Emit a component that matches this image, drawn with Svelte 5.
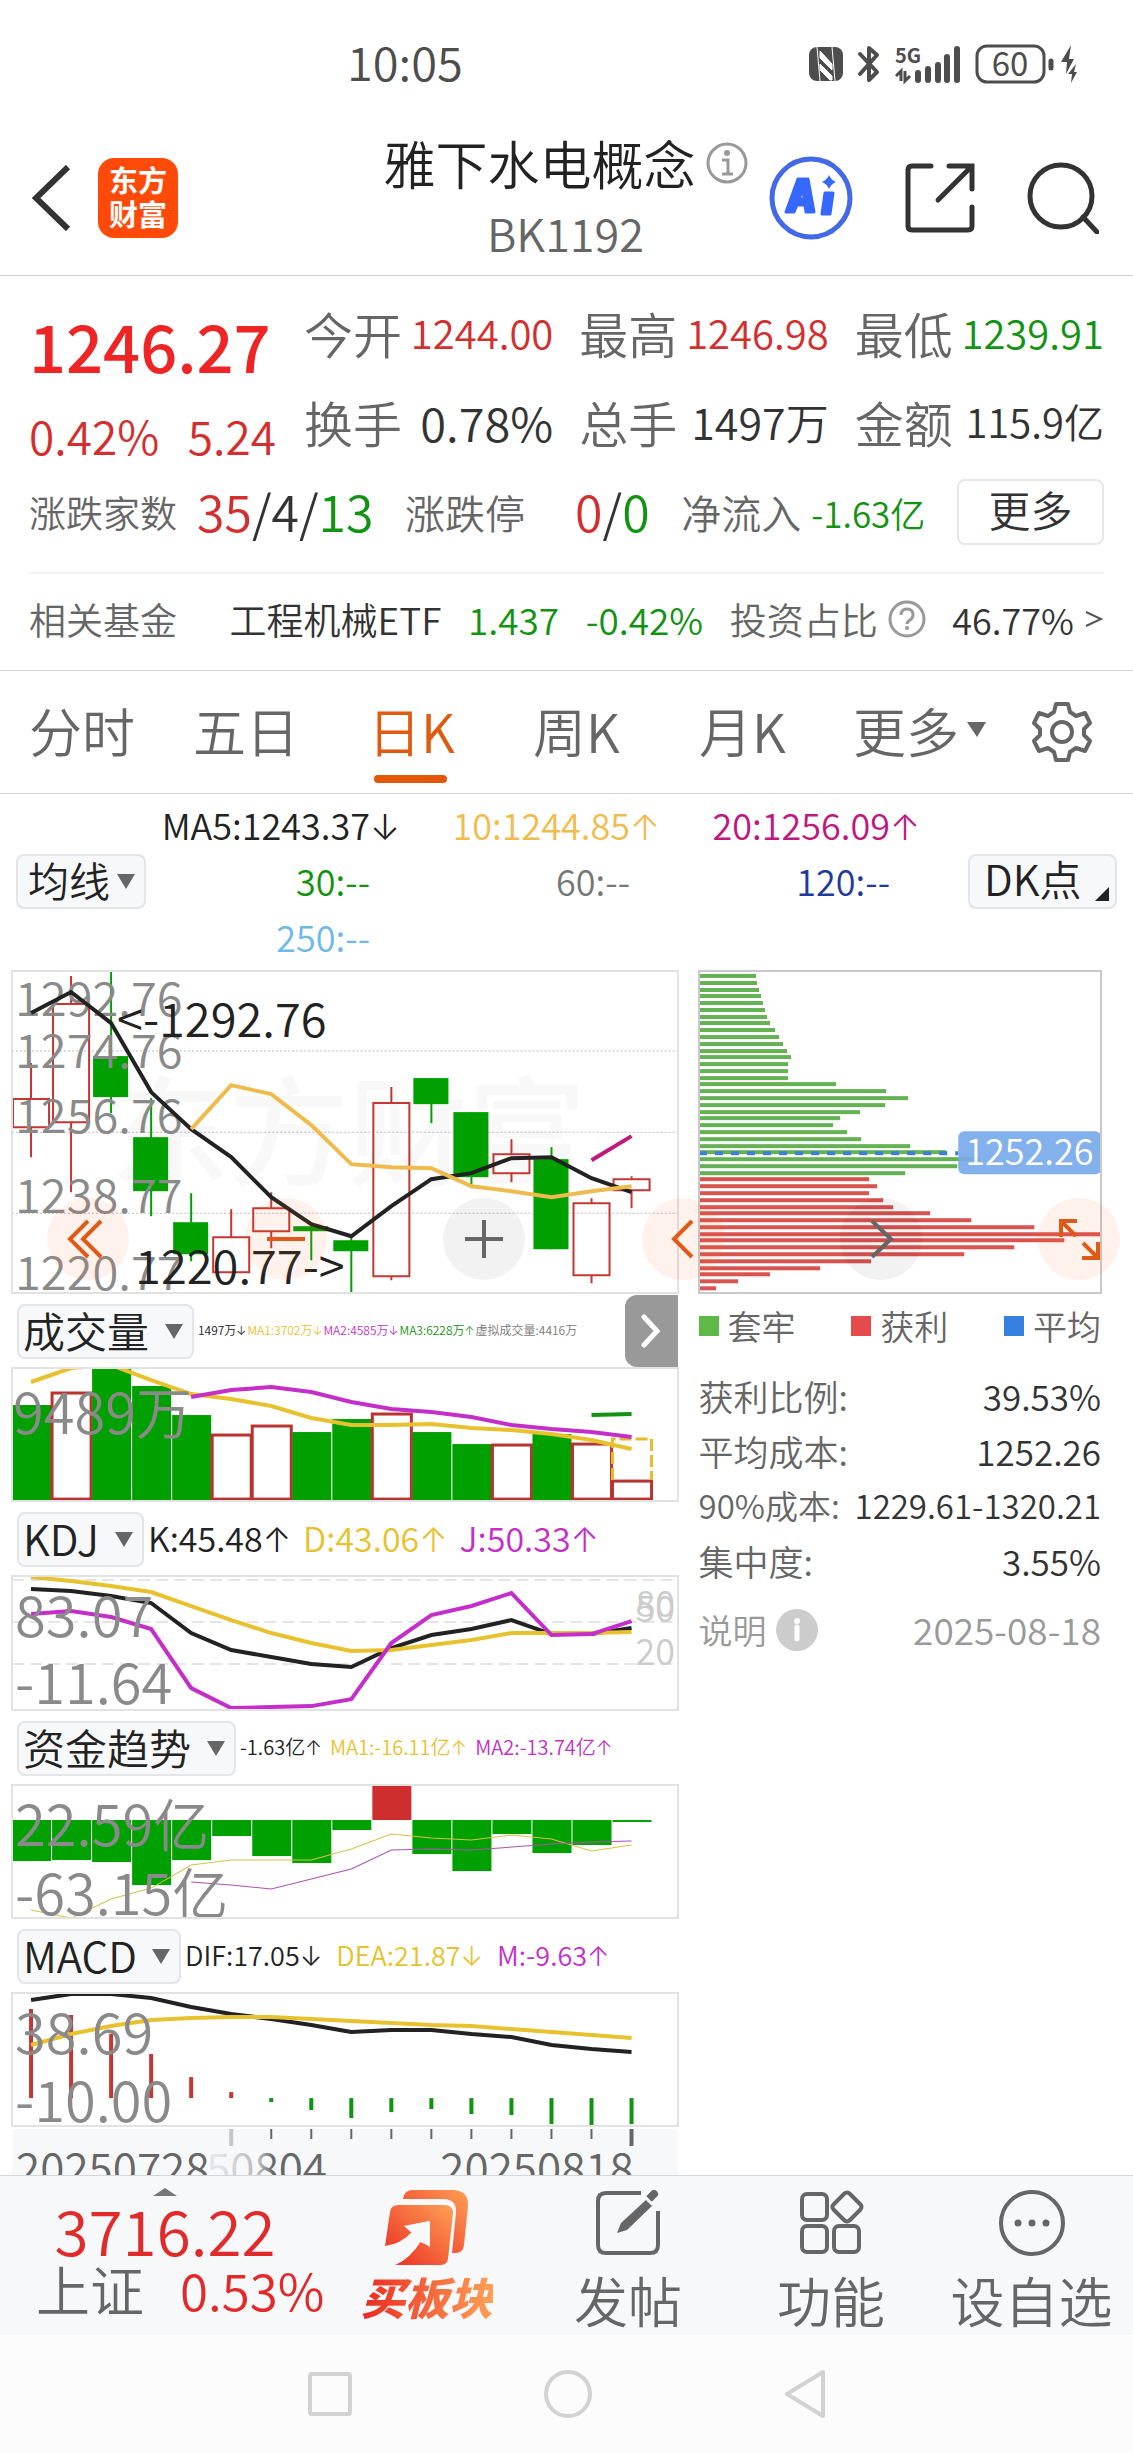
<script>
	const STEP = 40;
	const HALF = 19;

	const tabs = ['分时', '五日', '日K', '周K', '月K'];
	let activeTab = $state('日K');

	const quotes = [
		{ label: '今开', value: '1244.00', tone: 'up' },
		{ label: '最高', value: '1246.98', tone: 'up' },
		{ label: '最低', value: '1239.91', tone: 'down' },
		{ label: '换手', value: '0.78%', tone: 'big' },
		{ label: '总手', value: '1497万', tone: 'mid' },
		{ label: '金额', value: '115.9亿', tone: '' }
	];

	const averages = [
		{ text: 'MA5:1243.37', arrow: '↓', color: '#222222' },
		{ text: '10:1244.85', arrow: '↑', color: '#f2bb4d' },
		{ text: '20:1256.09', arrow: '↑', color: '#c0187f' },
		{ text: '30:--', arrow: '', color: '#129312' },
		{ text: '60:--', arrow: '', color: '#777777' },
		{ text: '120:--', arrow: '', color: '#1f3a9e' },
		{ text: '250:--', arrow: '', color: '#6db9ea' }
	];

	// [body top, body bottom, high, low, rising]
	const candles = [
		[128, 156, 92, 186, 1],
		[33, 151, 5, 221, 1],
		[85, 126, 0, 142, 0],
		[166, 220, 127, 245, 0],
		[251, 283, 222, 290, 0],
		[266, 301, 238, 301, 1],
		[237, 260, 221, 277, 1],
		[255, 260, 255, 289, 0],
		[269, 280, 266, 322, 0],
		[132, 305, 116, 309, 1],
		[107, 133, 107, 152, 0],
		[141, 206, 141, 217, 0],
		[183, 202, 168, 211, 1],
		[188, 278, 176, 278, 0],
		[232, 304, 227, 312, 1],
		[208, 219, 205, 237, 1]
	];
	const ma5 = [42, 21, 52, 121, 158, 186, 226, 253, 265, 235, 208, 202, 187, 186, 207, 221];
	const ma10 = [158, 114, 123, 154, 193, 196, 197, 215, 220, 226, 220, 215];

	// [top, rising]
	const volumes = [
		[37, 0], [24, 1], [0, 0], [18, 0], [47, 0], [66, 1], [57, 1], [64, 0],
		[51, 0], [45, 1], [64, 0], [76, 0], [76, 1], [66, 0], [75, 1], [112, 1]
	];
	const flows = [76, 75, 77, 100, 75, 51, 71, 78, 45, 0, 69, 86, 49, 68, 60, 37];
	const macdBars = [16, 22, 41, 61, 84, 99, 109, 117, 125, 119, 116, 121, 122, 131, 133, 131];

	const trapped = [
		57, 58, 60, 62, 64, 66, 68, 71, 76, 80, 84, 88, 92, 89, 89, 89, 137, 187, 209, 186, 161, 141,
		134, 148, 162, 211, 247, 281, 258, 206
	];
	const profit = [170, 178, 170, 184, 194, 231, 272, 335, 401, 365, 315, 265, 172, 121, 71, 39, 17];
	const chips = [...trapped, ...profit];

	const indicators = [
		{
			id: 'vol', name: '成交量', size: 'xs',
			legend: [
				['1497万', '↓', '#222222'],
				['MA1:3702万', '↓', '#e8c22e'],
				['MA2:4585万', '↓', '#c42fc9'],
				['MA3:6228万', '↑', '#129312'],
				['虚拟成交量:4416万', '', '#777777']
			],
			labels: [['9489万', 1, 66]],
			lines: [
				['#e8c22e', 0, [14, 0, -3, 12, 26, 31, 38, 50, 57, 57, 56, 60, 62, 66, 72, 81]],
				['#c42fc9', 4, [29, 22, 19, 24, 34, 41, 44, 49, 57, 61, 64, 69]],
				['#129312', 14, [47, 46]]
			]
		},
		{
			id: 'kdj', name: 'KDJ', size: 'lg',
			legend: [
				['K:45.48', '↑', '#222222'],
				['D:43.06', '↑', '#e8c22e'],
				['J:50.33', '↑', '#c42fc9']
			],
			labels: [['83.07', 3, 61], ['-11.64', 3, 128]],
			lines: [
				['#222222', 0, [13, 15, 20, 27, 57, 74, 81, 88, 91, 72, 59, 53, 44, 58, 58, 52]],
				['#e8c22e', 0, [1, 5, 10, 16, 30, 44, 57, 67, 75, 74, 69, 64, 57, 57, 57, 56]],
				['#c42fc9', 0, [38, 35, 41, 53, 112, 132, 131, 130, 123, 67, 39, 30, 17, 59, 58, 45]]
			]
		},
		{
			id: 'fund', name: '资金趋势', size: 'sm',
			legend: [
				['-1.63亿', '↑', '#222222'],
				['MA1:-16.11亿', '↑', '#e8c22e'],
				['MA2:-13.74亿', '↑', '#c42fc9']
			],
			labels: [['22.59亿', 3, 61], ['-63.15亿', 3, 130]],
			thin: true,
			lines: [
				['#d8c04a', 0, [125, 133, 114, 103, 80, 75, 75, 75, 64, 49, 53, 55, 50, 54, 66, 60]],
				['#b04fb3', 4, [97, 100, 104, 94, 84, 65, 64, 65, 62, 59, 57, 56]]
			]
		},
		{
			id: 'macd', name: 'MACD', size: 'md',
			legend: [
				['DIF:17.05', '↓', '#222222'],
				['DEA:21.87', '↓', '#e8c22e'],
				['M:-9.63', '↑', '#c42fc9']
			],
			labels: [['38.69', 3, 61], ['-10.00', 3, 129]],
			lines: [
				['#222222', 0, [7, 1, 1, 5, 14, 21, 26, 32, 39, 37, 37, 41, 44, 52, 56, 59]],
				['#e8c22e', 0, [52, 41, 33, 27, 25, 24, 24, 26, 28, 30, 32, 33, 36, 39, 42, 45]]
			]
		}
	];

	const costs = [
		{ label: '获利比例:', value: '39.53%' },
		{ label: '平均成本:', value: '1252.26' },
		{ label: '90%成本:', value: '1229.61-1320.21', small: true },
		{ label: '集中度:', value: '3.55%' }
	];

	function points(values, start = 0) {
		return values.map((y, i) => `${HALF + (i + start) * STEP},${y}`).join(' ');
	}
</script>

<div class="app">
	<div class="status">
		<span class="clock">10:05</span>
		<div class="status-icons">
			<svg width="34" height="36" viewBox="0 0 34 36">
				<rect x="0" y="1" width="34" height="34" rx="8" fill="#4d4d4d" />
				<path d="M8 1l3 34M23 1l3 34M11 5v7l12 12v-6zM11 18v6l10 10h2v-4z" stroke="#fff" stroke-width="1" fill="#fff" />
			</svg>
			<svg width="24" height="38" viewBox="0 0 24 38">
				<path d="M3 9l17 18-8 8V3l8 7L3 29" fill="none" stroke="#4d4d4d" stroke-width="4" stroke-linejoin="round" stroke-linecap="round" />
			</svg>
			<svg width="66" height="38" viewBox="0 0 66 38">
				<text x="0" y="18" font-size="20" font-weight="700" fill="#4d4d4d">5G</text>
				<path d="M6 36V26l-5 5M10 26v10l5-5" stroke="#4d4d4d" stroke-width="3" fill="none" />
				<path d="M23 28v7M33 24v11M43 20v15M52 12v23M62 4v31" stroke="#4d4d4d" stroke-width="6" stroke-linecap="round" />
			</svg>
			<svg class="battery" width="104" height="40" viewBox="0 0 104 40">
				<rect x="2" y="2" width="67" height="36" rx="10" fill="none" stroke="#4d4d4d" stroke-width="3" />
				<text x="35" y="32" font-size="33" font-weight="400" text-anchor="middle" fill="#4d4d4d">60</text>
				<path d="M76 17v7" stroke="#4d4d4d" stroke-width="5" stroke-linecap="round" />
				<path d="M96 1l-10 17h6l-1 12 8-15h-5zM101 20l-8 10h4l-1 9 6-11h-3z" fill="#4d4d4d" />
			</svg>
		</div>
	</div>

	<header>
		<div class="head-left">
			<button class="icon" aria-label="返回">
				<svg width="40" height="66" viewBox="0 0 40 66">
					<path d="M36 2L4 33l32 31" fill="none" stroke="#333" stroke-width="6" />
				</svg>
			</button>
			<a class="logo" href="#home"><span>东方</span><span>财富</span></a>
		</div>
		<div class="head-title">
			<h1>
				雅下水电概念
				<svg width="42" height="42" viewBox="0 0 42 42">
					<circle cx="21" cy="21" r="19" fill="none" stroke="#999" stroke-width="3" />
					<circle cx="21" cy="11" r="3" fill="#999" />
					<path d="M16 18h6v14M16 32h11" fill="none" stroke="#999" stroke-width="3" />
				</svg>
			</h1>
			<p>BK1192</p>
		</div>
		<div class="head-right">
			<button class="icon" aria-label="AI">
				<svg width="84" height="84" viewBox="0 0 84 84">
					<circle cx="42" cy="42" r="39" fill="none" stroke="#4169e8" stroke-width="5" />
					<path fill="#3668ff" fill-rule="evenodd" stroke="#3668ff" stroke-width="3" stroke-linejoin="round" d="M29 23h10l6 33h-8l-1-7h-8l-3 7h-8zM34 32l-4 11h5zM56 37h8l-3 21h-8z" />
					<path fill="#3668ff" d="M60 19q2 5 7 7-5 2-7 7-2-5-7-7 5-2 7-7z" />
				</svg>
			</button>
			<button class="icon" aria-label="分享">
				<svg width="70" height="70" viewBox="0 0 70 70">
					<path d="M26 3H7q-4 0-4 4v56q0 4 4 4h56q4 0 4-4V44M44 3h23v23M66 4L33 37" fill="none" stroke="#333" stroke-width="5" stroke-linecap="round" />
				</svg>
			</button>
			<button class="icon" aria-label="搜索">
				<svg width="72" height="72" viewBox="0 0 72 72">
					<circle cx="34" cy="34" r="31" fill="none" stroke="#333" stroke-width="5" />
					<path d="M56 55l14 15" stroke="#333" stroke-width="5" stroke-linecap="round" />
				</svg>
			</button>
		</div>
	</header>

	<section class="quote">
		<div class="quote-top">
			<div class="price">
				<strong>1246.27</strong>
				<div class="change"><span>0.42%</span><span>5.24</span></div>
			</div>
			<div class="quote-grid">
				{#each quotes as q}
					<div class="cell">
						<span class="label">{q.label}</span>
						<span class="value {q.tone}">{q.value}</span>
					</div>
				{/each}
			</div>
		</div>

		<div class="breadth">
			<div class="pair"><span class="name">涨跌家数</span><span class="count"><i class="up">35</i>/4/<i class="down">13</i></span></div>
			<div class="pair wide"><span class="name large">涨跌停</span><span class="count"><i class="up">0</i>/<i class="down">0</i></span></div>
			<div class="pair tight"><span class="name large">净流入</span><span class="down inflow">-1.63亿</span></div>
			<button class="more">更多</button>
		</div>

		<div class="fund-row">
			<span class="name first">相关基金</span>
			<a href="#etf">工程机械ETF</a>
			<span class="down">1.437</span>
			<span class="down">-0.42%</span>
			<span class="ratio">
				<span class="name">投资占比</span>
				<svg width="38" height="38" viewBox="0 0 38 38">
					<circle cx="19" cy="19" r="17" fill="none" stroke="#999" stroke-width="3" />
					<path d="M13 15q0-6 6-6t6 6q0 3-3 5t-3 4" fill="none" stroke="#999" stroke-width="3" />
					<circle cx="19" cy="28" r="2" fill="#999" />
				</svg>
			</span>
			<span class="percent">46.77%<svg width="20" height="20" viewBox="0 0 20 20"><path d="M2 3l15 7-15 7" fill="none" stroke="#555" stroke-width="2" /></svg></span>
		</div>
	</section>

	<nav class="tabs">
		{#each tabs as tab}
			<button class:active={tab === activeTab} onclick={() => (activeTab = tab)}>{tab}</button>
		{/each}
		<button>更多<svg width="20" height="16" viewBox="0 0 20 16"><path d="M0 0h19l-9 15z" fill="#666" /></svg></button>
		<button class="gear" aria-label="设置">
			<svg width="62" height="62" viewBox="0 0 62 62">
				<path d="M25 3h12l2 8 6 4 9-3 5 10-6 6v6l6 6-5 10-9-3-6 4-2 8H25l-2-8-6-4-9 3-5-10 6-6v-6l-6-6 5-10 9 3 6-4z" fill="none" stroke="#666" stroke-width="4" stroke-linejoin="round" />
				<circle cx="31" cy="31" r="10" fill="none" stroke="#666" stroke-width="4" />
			</svg>
		</button>
	</nav>

	<section class="averages">
		<div class="picker compact">
			<select aria-label="均线"><option>均线</option></select>
			<svg width="18" height="15" viewBox="0 0 18 15"><path d="M0 0h18L9 15z" fill="#666" /></svg>
		</div>
		<ul>
			{#each averages as a}
				<li style:color={a.color}>{a.text}<span class="arrow">{a.arrow}</span></li>
			{/each}
		</ul>
		<button class="dk">DK点<svg width="14" height="14" viewBox="0 0 14 14"><path d="M14 0v14H0z" fill="#222" /></svg></button>
	</section>

	<main>
		<div class="charts">
			<svg class="plot" viewBox="0 0 665 322">
				<text class="watermark" x="98" y="206">东方财富</text>
				{#each [80, 161, 242] as y}
					<path d="M0 {y}H665" stroke="#bbb" stroke-width="1" stroke-dasharray="2 2" />
				{/each}
				{#each candles as [top, bottom, high, low, rising], i}
					{@const x = HALF + i * STEP}
					{#if rising}
						<path d="M{x} {high}V{top}M{x} {bottom}V{low}M{x - 18} {top}h36V{bottom}h-36z" fill="none" stroke="#c43734" stroke-width="2" />
					{:else}
						<path d="M{x} {high}V{low}" stroke="#00a000" stroke-width="2" />
						<rect x={x - 18} y={top} width="35" height={bottom - top} fill="#00a000" />
					{/if}
				{/each}
				<g class="axis-label price-label">
					<text x="3" y="45">1292.76</text>
					<text x="3" y="97">1274.76</text>
					<text x="3" y="162">1256.76</text>
					<text x="3" y="242">1238.77</text>
					<text x="3" y="319">1220.77</text>
				</g>
				<polyline points={points(ma5)} fill="none" stroke="#222" stroke-width="4" />
				<polyline points={points(ma10, 4)} fill="none" stroke="#f0bb4e" stroke-width="4" />
				<polyline points={points([189, 165], 14)} fill="none" stroke="#c0187f" stroke-width="4" />
				<g class="mark">
					<text x="105" y="66">&lt;-1292.76</text>
					<text x="123" y="313">1220.77-&gt;</text>
				</g>
			</svg>

			{#each indicators as ind}
				<div class="bar">
					<div class="picker">
						<select aria-label={ind.name}><option>{ind.name}</option></select>
						<svg width="18" height="15" viewBox="0 0 18 15"><path d="M0 0h18L9 15z" fill="#666" /></svg>
					</div>
					<div class="legend {ind.size}">
						{#each ind.legend as [text, arrow, color]}
							<span style:color>{text}<span class="arrow">{arrow}</span></span>
						{/each}
					</div>
					{#if ind.id === 'vol'}
						<button class="fold" aria-label="收起">
							<svg width="20" height="34" viewBox="0 0 20 34"><path d="M3 3l13 14L3 31" fill="none" stroke="#fff" stroke-width="5" stroke-linecap="round" /></svg>
						</button>
					{/if}
				</div>
				<svg class="plot" viewBox="0 0 665 133">
					{#if ind.id === 'vol'}
						{#each volumes as [top, rising], i}
							{#if rising}
								<rect x={i * STEP} y={top + 1} width="39" height={130 - top} fill="#fff" stroke="#b93330" stroke-width="3" />
							{:else}
								<rect x={i * STEP} y={top} width="39" height={132 - top} fill="#00a000" />
							{/if}
						{/each}
						<path d="M600 112V71h39v41" fill="none" stroke="#e8b92e" stroke-width="3" stroke-dasharray="12 4" />
					{:else if ind.id === 'kdj'}
						{#each [4, 46, 88] as y}
							<path d="M0 {y}H665" stroke="#ccc" stroke-width="1" stroke-dasharray="12 6" />
						{/each}
						<g class="level">
							<text x="623" y="41">80</text>
							<text x="623" y="46">50</text>
							<text x="623" y="89">20</text>
						</g>
					{:else if ind.id === 'fund'}
						{#each flows as end, i}
							<rect x={i * STEP} y={Math.min(end, 35)} width="39" height={Math.abs(end - 35)} fill={end < 35 ? '#cf2e2e' : '#00a000'} />
						{/each}
					{:else}
						{#each macdBars as end, i}
							<path d="M{HALF + i * STEP} 105V{end}" stroke={end < 105 ? '#c43734' : '#129312'} stroke-width="4" />
						{/each}
					{/if}
					{#each ind.lines as [color, start, values]}
						<polyline points={points(values, start)} fill="none" stroke={color} stroke-width={ind.thin ? 1 : 4} />
					{/each}
					<g class="axis-label">
						{#each ind.labels as [text, x, y]}
							<text {x} {y}>{text}</text>
						{/each}
					</g>
				</svg>
			{/each}

			<svg class="dates" viewBox="0 0 665 46">
				<defs>
					<linearGradient id="fade">
						<stop offset="0.1" stop-color="#e4e5e7" />
						<stop offset="0.45" stop-color="#b5b5b5" />
						<stop offset="0.55" stop-color="#666" />
					</linearGradient>
				</defs>
				<path d="M219 0v17" stroke="#c5c6c9" stroke-width="4" />
				{#each [6, 7, 8, 9, 10, 11, 12, 13, 14] as i}
					<path d="M{HALF + i * STEP} 0v10" stroke="#666" stroke-width="2" />
				{/each}
				<path d="M619 0v17" stroke="#666" stroke-width="4" />
				<text x="4" y="56">20250728</text>
				<text x="194" y="56" fill="url(#fade)">50804</text>
				<text x="428" y="56">20250818</text>
			</svg>
		</div>

		<aside>
			<svg class="chips" viewBox="0 0 402 322">
				{#each chips as length, i}
					<rect x="0" y={3 + Math.round(i * 6.78)} width={length} height="4" fill={i < trapped.length ? '#64b254' : '#d9534f'} />
				{/each}
				<path d="M0 182H259" stroke="#3f7fd0" stroke-width="4" stroke-dasharray="8 8" />
				<rect x="259" y="160" width="143" height="43" rx="6" fill="#78aae9" fill-opacity="0.92" />
				<text x="330" y="194" text-anchor="middle">1252.26</text>
			</svg>
			<div class="keys">
				<span><i style:background="#5fb946"></i>套牢</span>
				<span><i style:background="#e64b4b"></i>获利</span>
				<span><i style:background="#3680e0"></i>平均</span>
			</div>
			<dl>
				{#each costs as c}
					<div class:small={c.small}>
						<dt>{c.label}</dt>
						<dd>{c.value}</dd>
					</div>
				{/each}
			</dl>
			<div class="note">
				<span>说明</span>
				<svg width="42" height="42" viewBox="0 0 42 42">
					<circle cx="21" cy="21" r="21" fill="#ccc" />
					<path d="M21 18v12" stroke="#fff" stroke-width="5" stroke-linecap="round" />
					<circle cx="21" cy="12" r="3" fill="#fff" />
				</svg>
				<time>2025-08-18</time>
			</div>
		</aside>

		<div class="tools">
			<button aria-label="最左"><svg viewBox="0 0 82 82"><path d="M41 23L23 41l18 18M54 23L36 41l18 18" /></svg></button>
			<button aria-label="缩小"><svg viewBox="0 0 82 82"><path d="M22 41h38" /></svg></button>
			<button class="gray" aria-label="放大"><svg viewBox="0 0 82 82"><path d="M22 41h38M41 22v38" /></svg></button>
			<button aria-label="左移"><svg viewBox="0 0 82 82"><path d="M50 23L32 41l18 18" /></svg></button>
			<button class="gray" aria-label="右移"><svg viewBox="0 0 82 82"><path d="M32 23l19 18-19 18" /></svg></button>
			<button aria-label="全屏"><svg viewBox="0 0 82 82"><path d="M39 23H23v16M24 24l14 14M44 60h16V44M59 59L45 45" /></svg></button>
		</div>
	</main>

	<footer>
		<div class="index">
			<svg width="24" height="8" viewBox="0 0 24 8"><path d="M0 8L12 0l12 8z" fill="#777" /></svg>
			<strong>3716.22</strong>
			<div><span>上证</span><em>0.53%</em></div>
		</div>
		<button class="buy">
			<svg width="84" height="76" viewBox="0 0 84 76">
				<defs>
					<linearGradient id="hot" x1="0" y1="1" x2="1" y2="0">
						<stop offset="0" stop-color="#ea2a22" />
						<stop offset="1" stop-color="#ffa055" />
					</linearGradient>
				</defs>
				<path fill="url(#hot)" d="M18 9q1-9 10-9h41q15 1 14 16l-4 39q-1 8-8 8h-4l4-40q1-14-13-14z" />
				<path fill="url(#hot)" d="M5 22q1-7 8-7h46q9 0 9 8l-5 46q-1 6-8 6H10q16-8 25-23l10 4V31L20 36l7 6Q16 54 0 56z" />
				<path fill="#f7f8fa" d="M0 57q18-2 27-14l-8-7 26-5v26l-9-6Q25 69 10 75L0 76z" />
			</svg>
			<b>买板块</b>
		</button>
		<button>
			<svg width="66" height="66" viewBox="0 0 66 66">
				<path d="M46 3H11q-8 0-8 8v44q0 8 8 8h44q8 0 8-8V21" fill="none" stroke="#666" stroke-width="4" />
				<path d="M22 43l4-10 26-24 6 6-26 25z" fill="#666" />
				<path d="M55 8l4-4" stroke="#666" stroke-width="8" stroke-linecap="round" />
				<path d="M50 7l8 8" stroke="#f7f8fa" stroke-width="3" />
			</svg>
			发帖
		</button>
		<button>
			<svg width="66" height="66" viewBox="0 0 66 66" fill="none" stroke="#666" stroke-width="4">
				<rect x="4" y="4" width="25" height="26" rx="5" />
				<rect x="4" y="36" width="25" height="26" rx="5" />
				<rect x="36" y="36" width="25" height="26" rx="5" />
				<path d="M46 4q3-3 6 0l10 10q3 3 0 6L52 30q-3 3-6 0L36 20q-3-3 0-6z" />
			</svg>
			功能
		</button>
		<button>
			<svg width="66" height="66" viewBox="0 0 66 66">
				<circle cx="33" cy="33" r="31" fill="none" stroke="#666" stroke-width="4" />
				<path d="M19 33h0M33 33h0M47 33h0" stroke="#666" stroke-width="7" stroke-linecap="round" />
			</svg>
			设自选
		</button>
	</footer>

	<div class="system">
		<svg width="44" height="44" viewBox="0 0 44 44"><rect x="2" y="2" width="40" height="40" rx="2" /></svg>
		<svg width="48" height="48" viewBox="0 0 48 48"><circle cx="24" cy="24" r="22" /></svg>
		<svg width="42" height="50" viewBox="0 0 42 50"><path d="M3 25L39 3v44z" stroke-linejoin="round" /></svg>
	</div>
</div>

<style>
	:global(body) {
		margin: 0;
		background: #fff;
	}
	.app {
		font-family: 'Noto Sans CJK SC', 'Noto Sans', sans-serif;
		font-weight: 350;
		color: #333;
		overflow: hidden;
	}
	.app * {
		box-sizing: border-box;
	}
	button,
	select {
		font: inherit;
		color: inherit;
		background: none;
		border: 0;
		padding: 0;
		cursor: pointer;
	}
	a {
		color: inherit;
		text-decoration: none;
	}
	svg {
		display: block;
		flex: none;
	}
	i,
	em {
		font-style: normal;
	}
	.up {
		color: #d32f2f;
	}
	.down {
		color: #129312;
	}
	.arrow {
		font-family: Inter, sans-serif;
		line-height: 1;
	}

	.status {
		display: flex;
		justify-content: space-between;
		align-items: center;
		height: 128px;
		padding: 0 54px 0 347px;
		color: #4d4d4d;
	}
	.clock {
		font-size: 47px;
		line-height: 60px;
		padding-bottom: 6px;
	}
	.status-icons {
		display: flex;
		align-items: center;
		gap: 14px;
	}
	.status-icons svg {
		overflow: visible;
	}

	header {
		display: grid;
		grid-template-columns: 1fr auto 1fr;
		align-items: center;
		height: 148px;
		padding: 0 34px 14px 32px;
		border-bottom: 1px solid #d4d4d4;
	}
	.head-left,
	.head-right {
		display: flex;
		align-items: center;
		gap: 26px;
	}
	.head-right {
		justify-content: flex-end;
		gap: 52px;
	}
	.logo {
		display: flex;
		flex-direction: column;
		align-items: center;
		justify-content: center;
		width: 80px;
		height: 80px;
		border-radius: 16px;
		background: #ff4a0a;
		color: #fff;
		font-size: 29px;
		font-weight: 700;
		line-height: 34px;
		padding-bottom: 4px;
	}
	.head-title {
		text-align: center;
	}
	h1 {
		display: flex;
		align-items: center;
		gap: 10px;
		margin: 0;
		font-size: 52px;
		font-weight: 350;
		line-height: 70px;
		color: #222;
	}
	.head-title p {
		margin: 0;
		font-size: 45px;
		line-height: 70px;
		color: #666;
	}

	.quote {
		border-bottom: 1px solid #d4d4d4;
		padding: 0 29px;
	}
	.quote-top {
		display: flex;
		gap: 28px;
		height: 202px;
		padding-top: 12px;
	}
	.price {
		width: 247px;
	}
	.price strong {
		display: block;
		font-size: 65px;
		font-weight: 500;
		line-height: 114px;
		color: #ef2424;
	}
	.change {
		display: flex;
		justify-content: space-between;
		font-size: 46px;
		line-height: 66px;
		color: #d32f2f;
	}
	.quote-grid {
		flex: 1;
		display: grid;
		grid-template-columns: repeat(3, 1fr);
		column-gap: 26px;
		align-content: start;
	}
	.cell {
		display: flex;
		justify-content: space-between;
		align-items: center;
		line-height: 89px;
		white-space: nowrap;
	}
	.label {
		font-size: 49px;
		color: #666;
	}
	.value {
		font-size: 40px;
	}
	.value.mid {
		font-size: 43px;
	}
	.value.big {
		font-size: 47px;
	}

	.breadth {
		display: flex;
		justify-content: space-between;
		align-items: center;
		height: 68px;
	}
	.pair {
		display: flex;
		align-items: center;
		gap: 20px;
	}
	.pair.wide {
		gap: 50px;
	}
	.pair.tight {
		gap: 10px;
	}
	.name {
		font-size: 37px;
		color: #666;
	}
	.name.large {
		font-size: 40px;
	}
	.count {
		font-size: 50px;
		line-height: 60px;
		padding-bottom: 4px;
	}
	.inflow {
		font-size: 35px;
	}
	.more {
		width: 147px;
		height: 66px;
		border: 2px solid #e6e7ea;
		border-radius: 8px;
		padding-bottom: 6px;
		font-size: 42px;
		line-height: 50px;
	}
	.fund-row {
		display: flex;
		justify-content: space-between;
		align-items: center;
		height: 98px;
		margin-top: 26px;
		padding-bottom: 6px;
		border-top: 2px solid #f3f3f3;
		font-size: 37px;
		line-height: 50px;
	}
	.name.first {
		padding-right: 26px;
	}
	.ratio,
	.percent {
		display: flex;
		align-items: center;
		gap: 10px;
	}
	.percent {
		font-size: 36px;
	}

	.tabs {
		display: grid;
		grid-template-columns: 164fr 175fr 165fr 166fr 154fr 178fr 60fr;
		height: 123px;
		padding: 0 40px 0 29px;
		border-bottom: 1px solid #d4d4d4;
		color: #666;
	}
	.tabs button {
		display: flex;
		align-items: center;
		justify-self: start;
		position: relative;
		padding-bottom: 4px;
		font-size: 53px;
	}
	.tabs button svg {
		margin-left: 8px;
	}
	.tabs .gear {
		padding-bottom: 0;
	}
	.tabs .gear svg {
		margin-left: 0;
	}
	.tabs .active {
		color: #e05a10;
	}
	.tabs .active::after {
		content: '';
		position: absolute;
		left: 6px;
		right: 8px;
		bottom: 10px;
		height: 8px;
		border-radius: 4px;
		background: #e45709;
	}

	.averages {
		display: flex;
		align-items: center;
		padding: 3px 16px 6px;
	}
	.averages ul {
		flex: 1;
		display: grid;
		grid-template-columns: 252fr 260fr 260fr;
		margin: 0;
		padding: 0 50px 0 0;
		list-style: none;
		font-size: 36px;
		line-height: 54px;
	}
	.averages li {
		height: 56px;
		text-align: right;
		white-space: nowrap;
	}
	.averages .arrow {
		display: inline-block;
		width: 28px;
	}
	.picker {
		display: flex;
		align-items: center;
		position: relative;
		flex: none;
		height: 55px;
		padding-bottom: 4px;
		border: 2px solid #e3e5e9;
		border-radius: 8px;
		background: #f7f8fa;
	}
	.picker select {
		flex: none;
		appearance: none;
		padding: 0 42px 0 4px;
		color: #222;
		font-size: 42px;
	}
	.picker svg {
		position: absolute;
		right: 9px;
		top: 18px;
		pointer-events: none;
	}
	.picker.compact select {
		width: 126px;
		padding: 0 30px 0 10px;
		font-size: 41px;
	}
	.dk {
		display: flex;
		align-items: flex-end;
		justify-content: space-between;
		width: 149px;
		height: 55px;
		padding: 0 6px 6px 14px;
		border: 2px solid #e3e5e9;
		border-radius: 8px;
		background: #f7f8fa;
		color: #222;
		font-size: 42px;
		line-height: 46px;
	}

	main {
		position: relative;
		display: grid;
		grid-template-columns: 665fr 402fr;
		column-gap: 21px;
		padding: 0 32px 0 12px;
	}
	.plot,
	.chips {
		width: 100%;
		height: auto;
		outline: 2px solid #e2e2e2;
		outline-offset: -1px;
	}
	.chips {
		outline-color: #c9c9c9;
	}
	.watermark {
		font-size: 119px;
		font-weight: 500;
		fill: #f8f8f8;
	}
	.axis-label {
		font-size: 56px;
		fill: #8a8a8a;
	}
	.price-label,
	.mark {
		font-size: 47px;
	}
	.mark {
		fill: #222;
	}
	.level {
		font-size: 36px;
		fill: #ccc;
	}
	.bar {
		position: relative;
		display: flex;
		align-items: center;
		gap: 4px;
		height: 75px;
		padding: 2px 0 0 5px;
	}
	.legend {
		display: flex;
		padding-bottom: 4px;
		white-space: nowrap;
	}
	.legend.xs {
		font-size: 12px;
		gap: 1px;
	}
	.legend.sm {
		font-size: 20px;
		gap: 8px;
	}
	.legend.md {
		font-size: 27px;
		gap: 14px;
	}
	.legend.lg {
		font-size: 34px;
		gap: 12px;
	}
	.fold {
		position: absolute;
		right: 0;
		top: 2px;
		display: flex;
		align-items: center;
		justify-content: center;
		width: 53px;
		height: 72px;
		border-radius: 12px 0 0 12px;
		background: #999;
	}
	.dates {
		width: 100%;
		height: auto;
		margin-top: 3px;
		background: #f7f8fa;
		font-size: 44px;
		fill: #666;
	}
	.chips text {
		font-size: 36px;
		fill: #fff;
	}
	.keys {
		display: flex;
		justify-content: space-between;
		margin-top: 8px;
		font-size: 34px;
		line-height: 50px;
		color: #666;
	}
	.keys span {
		display: flex;
		align-items: center;
		gap: 9px;
	}
	.keys i {
		width: 20px;
		height: 20px;
	}
	dl {
		margin: 17px 0 0;
		font-size: 35px;
		line-height: 55px;
	}
	dl div {
		display: flex;
		justify-content: space-between;
	}
	dl .small {
		font-size: 33px;
	}
	dt {
		color: #666;
	}
	dd {
		margin: 0;
	}
	.note {
		display: flex;
		align-items: center;
		gap: 9px;
		margin-top: 14px;
		font-size: 34px;
		line-height: 55px;
		color: #999;
	}
	.note time {
		margin-left: auto;
		font-size: 37px;
	}
	.tools {
		position: absolute;
		top: 227px;
		left: 47px;
		right: 13px;
		display: flex;
		justify-content: space-between;
	}
	.tools button {
		width: 82px;
		height: 82px;
		border-radius: 50%;
		background: rgba(255, 100, 30, 0.09);
	}
	.tools svg {
		fill: none;
		stroke: #e05a17;
		stroke-width: 4;
	}
	.tools .gray {
		background: rgba(0, 0, 0, 0.05);
	}
	.tools .gray svg {
		stroke: #666;
	}

	footer {
		display: grid;
		grid-template-columns: 330fr 194fr 208fr 198fr 203fr;
		height: 160px;
		border-top: 1px solid #d5d6dc;
		background: #f7f8fa;
		color: #666;
	}
	footer button {
		display: flex;
		flex-direction: column;
		align-items: center;
		padding-top: 14px;
		font-size: 54px;
		line-height: 88px;
		white-space: nowrap;
	}
	.index {
		display: flex;
		flex-direction: column;
		align-items: center;
		padding-top: 12px;
	}
	.index strong {
		font-size: 62px;
		font-weight: 350;
		line-height: 66px;
		color: #e12a2a;
	}
	.index div {
		display: flex;
		align-items: center;
		align-self: flex-start;
		gap: 36px;
		padding-left: 36px;
		font-size: 54px;
		line-height: 54px;
		white-space: nowrap;
	}
	.index em {
		font-size: 51px;
		color: #e12a2a;
	}
	.buy b {
		font-size: 44px;
		font-weight: 900;
		font-style: italic;
		line-height: 60px;
		background: linear-gradient(90deg, #ea2a22, #ffa055);
		background-clip: text;
		color: transparent;
	}
	.system {
		display: flex;
		justify-content: center;
		align-items: center;
		gap: 192px;
		height: 119px;
		background: #fcfcfc;
	}
	.system svg {
		fill: none;
		stroke: #d2d2d2;
		stroke-width: 4;
	}
</style>
